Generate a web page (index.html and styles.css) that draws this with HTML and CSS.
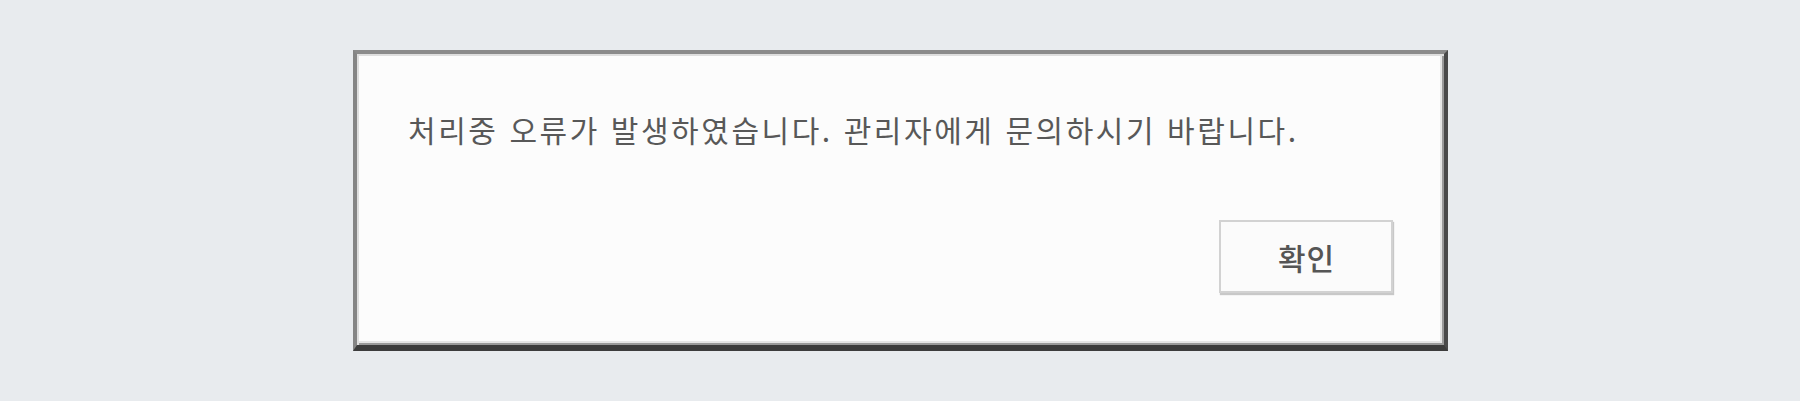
FILE: index.html
```html
<!DOCTYPE html>
<html lang="ko">
<head>
<meta charset="utf-8">
<title>오류</title>
<link rel="stylesheet" href="styles.css">
</head>
<body>
<div class="dialog">
  <p class="message">처리중 오류가 발생하였습니다. 관리자에게 문의하시기 바랍니다.</p>
  <button class="ok" type="button">확인</button>
</div>
</body>
</html>
```

FILE: styles.css
```css
html, body {
  margin: 0;
  padding: 0;
}
body {
  background: #e8ebee;
  width: 1800px;
  height: 401px;
  overflow: hidden;
  font-family: "Noto Sans CJK KR", "Noto Sans", sans-serif;
}
.dialog {
  box-sizing: border-box;
  width: 1095px;
  height: 301px;
  margin: 50px 0 0 353px;
  background: #fcfcfc;
  border-style: solid;
  border-width: 4px 4px 6px 4px;
  border-color: #8b8b8b #4a4a4a #3c3c3c #858585;
  box-shadow: inset 2px 2px 0 #dedede, inset -2px -2px 0 #9a9a9a, inset -4px -4px 0 #e6e6e6;
  padding: 0 51px 52px 51px;
  display: flex;
  flex-direction: column;
}
.message {
  margin: 55px 0 0 0;
  font-size: 30px;
  line-height: 40px;
  color: #585858;
  letter-spacing: 2.55px;
}
.ok {
  margin-top: auto;
  align-self: flex-end;
  width: 174px;
  height: 73px;
  box-sizing: border-box;
  background: #fbfbfb;
  border: 2px solid #d2d2d2;
  box-shadow: 1px 2px 1px #c8c8c8;
  font-family: "Noto Sans CJK KR", "Noto Sans", sans-serif;
  font-size: 30px;
  font-weight: 500;
  letter-spacing: 1px;
  color: #555555;
  padding: 0 0 0 1px;
}
```
